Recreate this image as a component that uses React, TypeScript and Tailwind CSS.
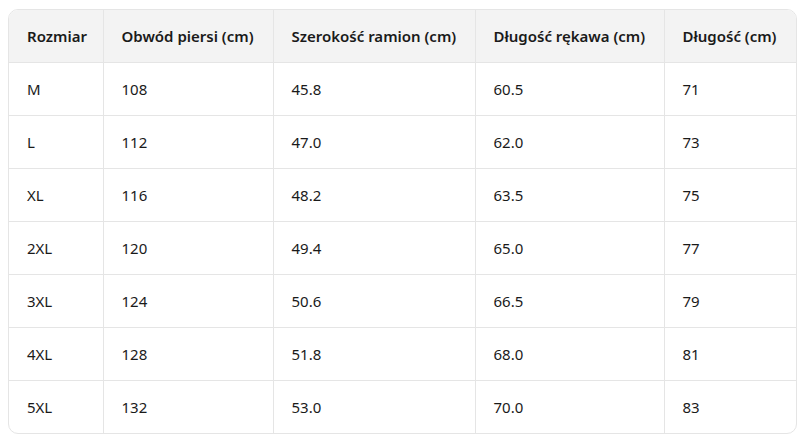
import React from "react";

const headers = ["Rozmiar", "Obwód piersi (cm)", "Szerokość ramion (cm)", "Długość rękawa (cm)", "Długość (cm)"];
const rows = [
  ["M", "108", "45.8", "60.5", "71"],
  ["L", "112", "47.0", "62.0", "73"],
  ["XL", "116", "48.2", "63.5", "75"],
  ["2XL", "120", "49.4", "65.0", "77"],
  ["3XL", "124", "50.6", "66.5", "79"],
  ["4XL", "128", "51.8", "68.0", "81"],
  ["5XL", "132", "53.0", "70.0", "83"],
];
const widths = ["w-[94px]", "w-[170px]", "w-[202px]", "w-[189px]", "w-[134px]"];

export default function App() {
  return (
    <div className="bg-white w-[805px] h-[443px] pt-[9px] pl-[8px]" style={{ fontFamily: '"Segoe UI", "Noto Sans", "Open Sans", sans-serif' }}>
      <div className="w-[789px] border border-[#e5e5e5] rounded-[10px] overflow-hidden">
        <table className="w-full border-collapse table-fixed text-[15px] leading-[20px] text-[#1a1a1a]">
          <thead>
            <tr className="bg-[#f3f3f3] h-[52px]">
              {headers.map((h, i) => (
                <th key={i} className={`${widths[i]} text-left font-semibold pl-[18px] p-0 border-b border-[#e5e5e5] ${i > 0 ? "border-l" : ""}`}>
                  {h}
                </th>
              ))}
            </tr>
          </thead>
          <tbody>
            {rows.map((r, ri) => (
              <tr key={ri} className="h-[53px]">
                {r.map((c, ci) => (
                  <td key={ci} className={`pl-[18px] border-[#e5e5e5] ${ri < rows.length - 1 ? "border-b" : ""} ${ci > 0 ? "border-l" : ""}`}>
                    {c}
                  </td>
                ))}
              </tr>
            ))}
          </tbody>
        </table>
      </div>
    </div>
  );
}
